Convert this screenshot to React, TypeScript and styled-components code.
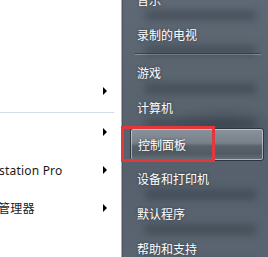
import React from "react";
import styled, { createGlobalStyle } from "styled-components";

const Global = createGlobalStyle`
  html, body { margin: 0; padding: 0; background: #ffffff; }
  body { width: 268px; height: 257px; overflow: hidden; }
`;

const Frame = styled.div`
  position: relative;
  width: 268px;
  height: 257px;
  display: flex;
  overflow: hidden;
`;

const LeftPane = styled.div`
  width: 121px;
  flex: none;
  background: #ffffff;
  display: flex;
  flex-direction: column;
  padding-top: 72px;
  overflow: hidden;
`;

const LeftRow = styled.div`
  height: 38px;
  flex: none;
  display: flex;
  align-items: center;
  justify-content: space-between;
  padding-right: 14px;
  font-family: "Noto Sans", "Noto Sans CJK SC", sans-serif;
  font-size: 12px;
  color: #1a1a1a;
  white-space: nowrap;
`;

const LeftLabel = styled.span<{ $shift?: number }>`
  margin-left: ${(p) => p.$shift ?? 0}px;
  letter-spacing: 0.2px;
`;

const Arrow = styled.span`
  width: 0;
  height: 0;
  border-top: 4px solid transparent;
  border-bottom: 4px solid transparent;
  border-left: 4px solid #000;
`;

const LeftSeparator = styled.div`
  height: 1px;
  flex: none;
  width: 114px;
  margin: 2px 0 0;
  background: #d3dde9;
`;

const Edge = styled.div`
  width: 1px;
  flex: none;
  background: #a7afb8;
`;

const RightPane = styled.div`
  flex: 1;
  display: flex;
  flex-direction: column;
  margin-top: -18px;
  background:
    radial-gradient(ellipse 60px 30px at 100px 150px, rgba(40, 48, 58, 0.35), transparent),
    linear-gradient(180deg, #5f6a76 0%, #59646f 40%, #56616d 70%, #5a6571 100%);
  border-left: 1px solid #4a5561;
`;

const Item = styled.div<{ $active?: boolean }>`
  position: relative;
  flex: none;
  height: ${(p) => (p.$active ? 33 : 35)}px;
  margin: ${(p) => (p.$active ? "3px 4px 0 7px" : "0")};
  padding-left: ${(p) => (p.$active ? 7 : 14)}px;
  display: flex;
  align-items: center;
  font-family: "Noto Sans CJK SC", "Noto Sans", sans-serif;
  font-size: 12px;
  color: #ffffff;
  text-shadow: 0 0 3px rgba(20, 26, 34, 0.6);
  border-radius: 3px;
  box-sizing: border-box;
  ${(p) =>
    p.$active
      ? `
    border: 1px solid #2f363e;
    box-shadow: inset 0 0 0 1px rgba(230, 235, 240, 0.55);
    background: linear-gradient(180deg, #8a929b 0%, #78818a 45%, #59626b 55%, #525b64 80%, #66707a 100%);
  `
      : `
    &::after {
      content: "";
      position: absolute;
      left: 22px;
      right: 12px;
      bottom: -3px;
      height: 9px;
      background: rgba(36, 43, 52, 0.42);
      filter: blur(4px);
    }
  `}
`;

const ItemText = styled.span`
  position: relative;
  z-index: 1;
`;

const RightSeparator = styled.div`
  height: 3px;
  flex: none;
  margin: 0 7px 0 12px;
  display: flex;
  flex-direction: column;
  justify-content: center;
  &::before {
    content: "";
    height: 1px;
    background: rgba(40, 48, 58, 0.6);
  }
  &::after {
    content: "";
    height: 1px;
    background: rgba(170, 180, 190, 0.55);
  }
`;

const Annotation = styled.div`
  position: absolute;
  left: 121px;
  top: 126px;
  width: 94px;
  height: 36px;
  box-sizing: border-box;
  border: 3px solid #e2383c;
  pointer-events: none;
`;

export default function App() {
  return (
    <>
      <Global />
      <Frame>
        <LeftPane>
          <LeftRow>
            <span />
            <Arrow />
          </LeftRow>
          <LeftSeparator />
          <LeftRow>
            <span />
            <Arrow />
          </LeftRow>
          <LeftRow>
            <LeftLabel $shift={-1}>station Pro</LeftLabel>
            <Arrow />
          </LeftRow>
          <LeftRow>
            <LeftLabel $shift={-2}>管理器</LeftLabel>
            <Arrow />
          </LeftRow>
        </LeftPane>
        <Edge />
        <RightPane>
          <Item><ItemText>音乐</ItemText></Item>
          <Item><ItemText>录制的电视</ItemText></Item>
          <RightSeparator />
          <Item><ItemText>游戏</ItemText></Item>
          <Item><ItemText>计算机</ItemText></Item>
          <Item $active><ItemText>控制面板</ItemText></Item>
          <Item><ItemText>设备和打印机</ItemText></Item>
          <Item><ItemText>默认程序</ItemText></Item>
          <Item><ItemText>帮助和支持</ItemText></Item>
        </RightPane>
        <Annotation />
      </Frame>
    </>
  );
}
